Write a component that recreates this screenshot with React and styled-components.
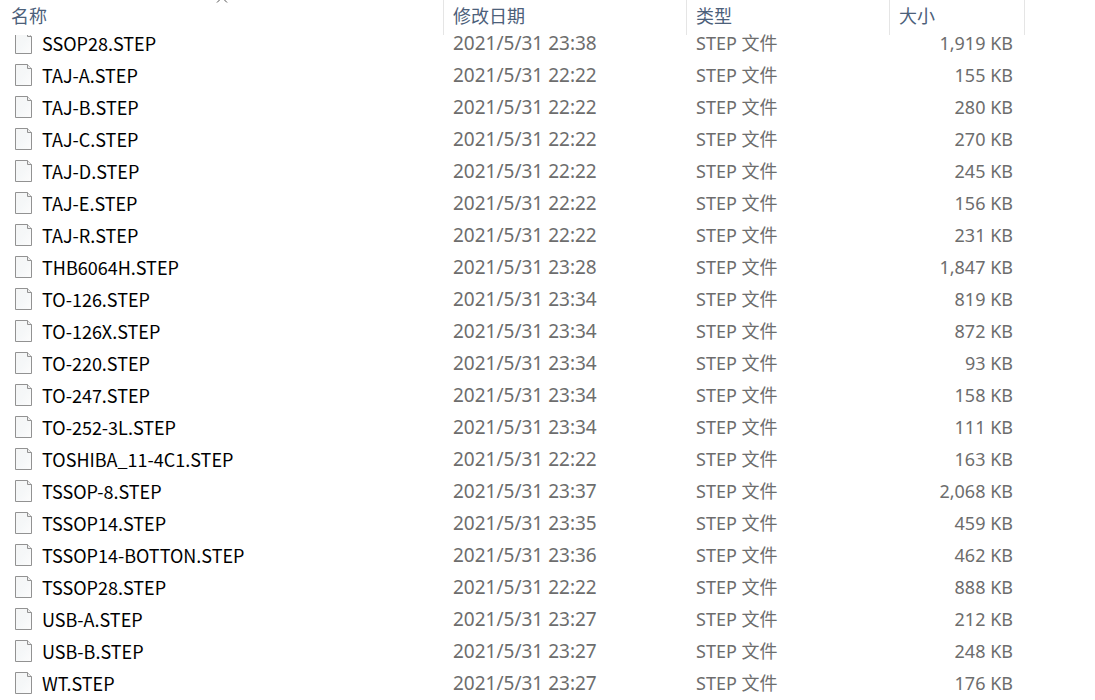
import React from 'react';
import styled, { createGlobalStyle } from 'styled-components';

const GlobalStyle = createGlobalStyle`
  * { box-sizing: border-box; }
  body {
    margin: 0;
    background: #fff;
    overflow: hidden;
    font-family: "Noto Sans", "Noto Sans CJK SC", sans-serif;
    font-size: 18px;
  }
`;

const FileTable = styled.table`
  width: 100%;
  table-layout: fixed;
  border-collapse: separate;
  border-spacing: 0;
`;

const Column = styled.col`
  width: ${(p) => p.$width};
`;

const HeadCell = styled.th`
  position: relative;
  height: 35px;
  padding: 0;
  border-right: 1px solid #e5e5e5;
`;

const SortButton = styled.button`
  display: flex;
  align-items: center;
  width: 100%;
  height: 35px;
  padding: 0 0 6px ${(p) => p.$inset};
  border: 0;
  background: none;
  color: #4c607a;
  font: 400 18px/24px "Noto Sans CJK SC", sans-serif;
  text-align: left;
`;

const SortMark = styled.svg`
  position: absolute;
  top: 0;
  left: 50%;
  margin-left: -6px;
`;

const Cell = styled.td`
  padding: 0 12px 0 ${(p) => p.$inset};
  color: #6d6d6d;
  font-size: ${(p) => p.$size || '18px'};
`;

const Line = styled.div`
  display: flex;
  align-items: flex-end;
  justify-content: ${(p) => (p.$end ? 'flex-end' : 'flex-start')};
  gap: 9px;
  height: ${(p) => (p.$short ? '24px' : '32px')};
  line-height: 32px;
  white-space: nowrap;
`;

const IconBox = styled.span`
  display: flex;
  align-items: flex-end;
  height: 100%;
  padding-bottom: 5px;
  overflow: hidden;
`;

const Name = styled.span`
  color: #000;
  font-family: "Noto Sans CJK SC", sans-serif;
`;

const FileIcon = () => (
  <svg width="18" height="22" viewBox="0 0 18 22" aria-hidden="true">
    <defs>
      <linearGradient id="sheet" x1="0" y1="0" x2="1" y2="1">
        <stop offset="0" stopColor="#f5f6f6" />
        <stop offset="0.5" stopColor="#f5f7f8" />
        <stop offset="1" stopColor="#fcfcfc" />
      </linearGradient>
    </defs>
    <path d="M.5 .5H12.5L16.5 4.5V21.5H.5Z" fill="url(#sheet)" stroke="#929292" />
    <path d="M12.5 .5V4.5H16.5" fill="#eee" stroke="#929292" />
  </svg>
);

const headings = [
  { label: '名称', inset: '11px', sorted: true },
  { label: '修改日期', inset: '9px' },
  { label: '类型', inset: '9px' },
  { label: '大小', inset: '9px' },
];

const files = [
  ['SSOP28.STEP', '23:38', '1,919'],
  ['TAJ-A.STEP', '22:22', '155'],
  ['TAJ-B.STEP', '22:22', '280'],
  ['TAJ-C.STEP', '22:22', '270'],
  ['TAJ-D.STEP', '22:22', '245'],
  ['TAJ-E.STEP', '22:22', '156'],
  ['TAJ-R.STEP', '22:22', '231'],
  ['THB6064H.STEP', '23:28', '1,847'],
  ['TO-126.STEP', '23:34', '819'],
  ['TO-126X.STEP', '23:34', '872'],
  ['TO-220.STEP', '23:34', '93'],
  ['TO-247.STEP', '23:34', '158'],
  ['TO-252-3L.STEP', '23:34', '111'],
  ['TOSHIBA_11-4C1.STEP', '22:22', '163'],
  ['TSSOP-8.STEP', '23:37', '2,068'],
  ['TSSOP14.STEP', '23:35', '459'],
  ['TSSOP14-BOTTON.STEP', '23:36', '462'],
  ['TSSOP28.STEP', '22:22', '888'],
  ['USB-A.STEP', '23:27', '212'],
  ['USB-B.STEP', '23:27', '248'],
  ['WT.STEP', '23:27', '176'],
];

export default function App() {
  return (
    <>
      <GlobalStyle />
      <FileTable>
        <colgroup>
          <Column $width="444px" />
          <Column $width="243px" />
          <Column $width="203px" />
          <Column $width="135px" />
          <Column $width="auto" />
        </colgroup>
        <thead>
          <tr>
            {headings.map((h) => (
              <HeadCell key={h.label} scope="col" aria-sort={h.sorted ? 'ascending' : undefined}>
                <SortButton type="button" $inset={h.inset}>{h.label}</SortButton>
                {h.sorted && (
                  <SortMark width="12" height="3" viewBox="0 0 12 3" aria-hidden="true">
                    <path d="M1 2.5L6 -2.5L11 2.5" fill="none" stroke="#555" />
                  </SortMark>
                )}
              </HeadCell>
            ))}
            <td />
          </tr>
        </thead>
        <tbody>
          {files.map(([name, time, size], i) => (
            <tr key={name}>
              <Cell $inset="15px">
                <Line $short={i === 0}>
                  <IconBox><FileIcon /></IconBox>
                  <Name>{name}</Name>
                </Line>
              </Cell>
              <Cell $inset="9px" $size="19px">
                <Line $short={i === 0}><span>2021/5/31 {time}</span></Line>
              </Cell>
              <Cell $inset="9px">
                <Line $short={i === 0}><span>STEP 文件</span></Line>
              </Cell>
              <Cell $inset="9px">
                <Line $short={i === 0} $end><span>{size} KB</span></Line>
              </Cell>
              <td />
            </tr>
          ))}
        </tbody>
      </FileTable>
    </>
  );
}
